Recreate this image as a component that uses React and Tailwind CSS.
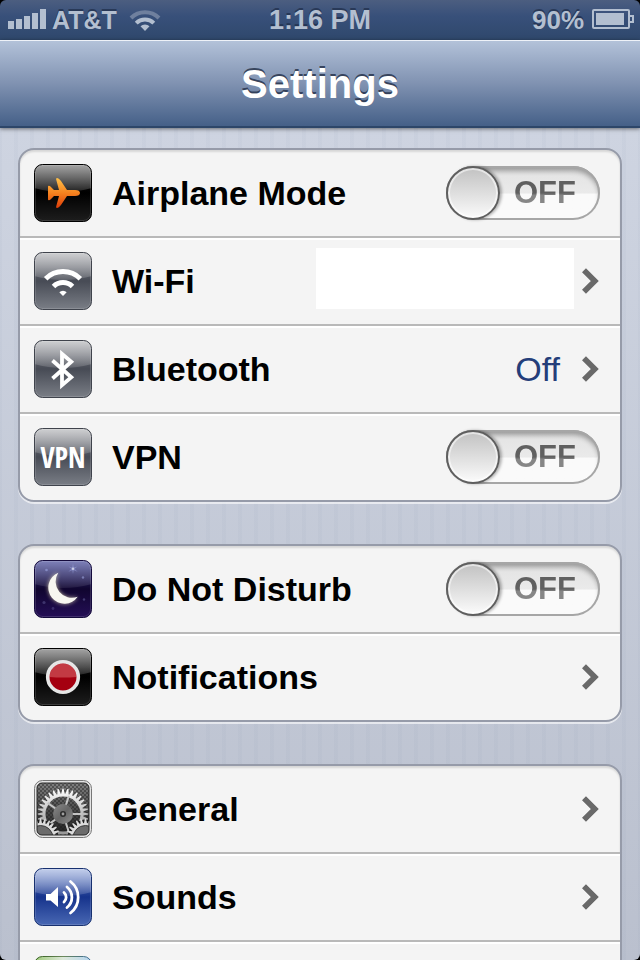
import React, { useId, useState } from "react";

const polar = (cx, cy, r, a) =>
  `${(cx + r * Math.cos(a)).toFixed(2)} ${(cy + r * Math.sin(a)).toFixed(2)}`;

// Outline of a gear wheel as an SVG path
const gearPath = (cx, cy, outer, root, teeth) => {
  const step = (Math.PI * 2) / teeth;
  let d = "";
  for (let i = 0; i < teeth; i++) {
    const a = i * step - Math.PI / 2;
    d += `${i === 0 ? "M" : "L"}${polar(cx, cy, root, a - step * 0.4)}`;
    d += `L${polar(cx, cy, outer, a - step * 0.12)}`;
    d += `L${polar(cx, cy, outer, a + step * 0.12)}`;
    d += `L${polar(cx, cy, root, a + step * 0.4)}`;
  }
  return d + "Z";
};

const Tile = ({ stops, border, gloss = 0.62, children }) => {
  const id = useId();
  return (
    <svg viewBox="0 0 58 58" className="h-[58px] w-[58px] shrink-0" aria-hidden="true">
      <defs>
        <linearGradient id={`${id}base`} x1="0" y1="0" x2="0" y2="1">
          <stop offset="0" stopColor={stops[0]} />
          <stop offset="0.5" stopColor={stops[1]} />
          <stop offset="1" stopColor={stops[2]} />
        </linearGradient>
        <linearGradient id={`${id}gloss`} x1="0" y1="0" x2="0" y2="1">
          <stop offset="0" stopColor="#fff" stopOpacity={gloss} />
          <stop offset="1" stopColor="#fff" stopOpacity={gloss * 0.2} />
        </linearGradient>
        <clipPath id={`${id}clip`}>
          <rect x="0.5" y="0.5" width="57" height="57" rx="8" />
        </clipPath>
      </defs>
      <g clipPath={`url(#${id}clip)`}>
        <rect width="58" height="58" fill={`url(#${id}base)`} />
        <path d="M0 0H58V24Q29 32 0 24Z" fill={`url(#${id}gloss)`} />
      </g>
      <rect x="1.5" y="1.5" width="55" height="55" rx="7" fill="none" stroke="#fff" strokeOpacity="0.14" />
      <rect x="0.5" y="0.5" width="57" height="57" rx="8" fill="none" stroke={border} />
      {children}
    </svg>
  );
};

const black = ["#1a1a1a", "#000000", "#1e1e1e"];
const slate = ["#85878d", "#474b55", "#7b7f87"];

const AirplaneIcon = () => (
  <Tile stops={black} border="#000">
    <defs>
      <linearGradient id="plane" x1="0" y1="0" x2="0" y2="1">
        <stop offset="0" stopColor="#ffc24a" />
        <stop offset="0.5" stopColor="#f5821f" />
        <stop offset="1" stopColor="#dc3c08" />
      </linearGradient>
    </defs>
    <path
      d="M46 29c0-2-2-3-5-3h-8l-6-9c-1.500-2-3-3-4-3s-1 1-.7 2L25 26h-5l-3.500-3.500c-.8-.8-2.500-1-2.500 0v13c0 1 1.700.8 2.500 0L20 32h5l-2.700 10c-.3 1-.3 2 .7 2s2.500-1 4-3l6-9h8c3 0 5-1 5-3z"
      fill="url(#plane)"
    />
  </Tile>
);

const WifiIcon = () => (
  <Tile stops={slate} border="#3f434c">
    <g fill="none" stroke="#fff" strokeWidth="5">
      <path d="M11.700 26.700A24.500 24.500 0 0 1 46.300 26.700" />
      <path d="M19.500 34.500A13.500 13.500 0 0 1 38.500 34.500" />
    </g>
    <path d="M29 44L25.300 40.300A5.200 5.200 0 0 1 32.700 40.300Z" fill="#fff" />
  </Tile>
);

const BluetoothIcon = () => (
  <Tile stops={slate} border="#3f434c">
    <path
      d="M18.500 20.500L37.300 37.300L28 45.200V13.800L37.300 21.700L18.500 38.500"
      fill="none"
      stroke="#fff"
      strokeWidth="3.800"
      strokeMiterlimit="10"
    />
  </Tile>
);

const VpnIcon = () => (
  <Tile stops={slate} border="#3f434c">
    <text
      x="29"
      y="40"
      textAnchor="middle"
      fill="#fff"
      className="font-['Liberation_Sans_Narrow','Open_Sans_Condensed','Liberation_Sans',sans-serif] text-[28px] font-bold"
    >
      VPN
    </text>
  </Tile>
);

const MoonIcon = () => (
  <Tile stops={["#3a3f96", "#10052f", "#250f57"]} border="#140a3c" gloss={0.36}>
    <g fill="#aab4f0">
      <circle cx="12.500" cy="10" r="1.300" opacity="0.5" />
      <circle cx="49" cy="17.500" r="1.200" opacity="0.5" />
      <circle cx="50" cy="39.500" r="1.200" opacity="0.3" />
      <circle cx="10" cy="42.500" r="1.600" opacity="0.25" />
      <circle cx="19" cy="48.500" r="1.400" opacity="0.2" />
      <path d="M39 3l.8 4.400 3.700-1-2.900 2.400 3 3-3.800-1.600L39 14l-.8-3.800-3.800 1.600 3-3-2.900-2.400 3.700 1z" opacity="0.4" />
      <circle cx="39" cy="8.800" r="1.200" fill="#fff" opacity="0.6" />
    </g>
    <path
      d="M24.300 12.700A16.100 16.100 0 1 0 43.700 36.700A16.200 16.200 0 0 1 24.300 12.700Z"
      fill="#f7f6f0"
      className="drop-shadow-[0_0_2px_rgba(255,245,200,0.7)]"
    />
  </Tile>
);

const NotificationsIcon = () => (
  <Tile stops={black} border="#000">
    <circle cx="29" cy="29" r="15.300" fill="#a50010" stroke="#e6e6e6" strokeWidth="3.600" />
    <path d="M15.500 29A13.500 13.500 0 0 1 42.500 29Q29 30 15.500 29Z" fill="#f09090" fillOpacity="0.4" />
  </Tile>
);

const SoundsIcon = () => (
  <Tile stops={["#6f8bd0", "#16338c", "#4a69b4"]} border="#17306f" gloss={0.6}>
    <path d="M12 26h4.500L24 19v20l-7.500-6.500H12z" fill="#fff" />
    <g fill="none" stroke="#fff" strokeWidth="2.800" strokeLinecap="round">
      <path d="M30 24.500A6.300 6.300 0 0 1 30 34" />
      <path d="M33 19A13.200 13.200 0 0 1 33 39.500" />
      <path d="M36.500 13.500A20 20 0 0 1 36.500 45" />
    </g>
  </Tile>
);

const GeneralIcon = () => (
  <svg viewBox="0 0 58 58" className="h-[58px] w-[58px] shrink-0" aria-hidden="true">
    <defs>
      <linearGradient id="metal" x1="0" y1="0" x2="0" y2="1">
        <stop offset="0" stopColor="#ffffff" />
        <stop offset="0.5" stopColor="#bdbdbd" />
        <stop offset="1" stopColor="#8c8c8c" />
      </linearGradient>
      <linearGradient id="plate" x1="0" y1="0" x2="0" y2="1">
        <stop offset="0" stopColor="#858585" />
        <stop offset="0.5" stopColor="#4c4c4c" />
        <stop offset="1" stopColor="#1c1c1c" />
      </linearGradient>
      <linearGradient id="hub" x1="0" y1="0" x2="1" y2="1">
        <stop offset="0" stopColor="#8a8a8a" />
        <stop offset="0.5" stopColor="#666666" />
        <stop offset="1" stopColor="#8f8f8f" />
      </linearGradient>
      <pattern id="holes" width="4" height="4" patternUnits="userSpaceOnUse">
        <circle cx="1" cy="1" r="0.8" fill="#1c1c1c" />
        <circle cx="3" cy="3" r="0.8" fill="#1c1c1c" />
      </pattern>
      <clipPath id="inner">
        <rect x="3" y="3" width="52" height="52" rx="5" />
      </clipPath>
    </defs>
    <rect x="0.5" y="0.5" width="57" height="57" rx="8" fill="#e4e4e4" stroke="#777" />
    <g clipPath="url(#inner)">
      <rect width="58" height="58" fill="url(#plate)" />
      <rect width="58" height="58" fill="url(#holes)" />
      <path
        fillRule="evenodd"
        fill="url(#metal)"
        d={`${gearPath(29, 34, 25.500, 20.500, 32)}M46.500 34A17.500 17.500 0 1 0 11.500 34A17.500 17.500 0 1 0 46.500 34Z`}
      />
      <path
        d={[0, 72, 144, 216, 288]
          .map((deg) => `M29 34L${polar(29, 34, 19, (deg * Math.PI) / 180)}`)
          .join("")}
        stroke="#c4c4c4"
        strokeWidth="2"
      />
      <circle cx="29" cy="34" r="10" fill="url(#hub)" />
      <circle cx="29" cy="34" r="3" fill="#2c2c2c" />
      <circle cx="29" cy="34" r="1.400" fill="#a0a0a0" />
      {[6.500, 51.500].map((cx) => (
        <g key={cx}>
          <circle cx={cx} cy="58" r="18" fill="#1f1f1f" />
          <path d={gearPath(cx, 58, 19.500, 15, 26)} fill="#dcdcdc" />
          <circle cx={cx} cy="58" r="12.500" fill="#6b6b6b" stroke="#3c3c3c" />
        </g>
      ))}
    </g>
    <rect x="3" y="3" width="52" height="52" rx="5" fill="none" stroke="#2a2a2a" />
  </svg>
);

const WallpaperIcon = () => (
  <svg viewBox="0 0 58 58" className="h-[58px] w-[58px] shrink-0" aria-hidden="true">
    <defs>
      <linearGradient id="photo" x1="0" y1="0" x2="1" y2="0">
        <stop offset="0" stopColor="#9fca7a" />
        <stop offset="0.5" stopColor="#dde8da" />
        <stop offset="1" stopColor="#b4d4ee" />
      </linearGradient>
      <linearGradient id="photoEdge" x1="0" y1="0" x2="1" y2="0">
        <stop offset="0" stopColor="#2f5a1c" />
        <stop offset="0.5" stopColor="#6d8a5c" />
        <stop offset="1" stopColor="#3a6a98" />
      </linearGradient>
    </defs>
    <rect x="0.5" y="0.5" width="57" height="57" rx="8" fill="url(#photo)" stroke="url(#photoEdge)" />
  </svg>
);

const Chevron = () => (
  <svg viewBox="0 0 18 26" className="h-[26px] w-[18px] shrink-0" aria-hidden="true">
    <path d="M2 2.200L12.800 13L2 23.800" fill="none" stroke="#696969" strokeWidth="5.600" />
  </svg>
);

const Switch = ({ id, checked, onChange }) => (
  <span className="relative flex h-[54px] w-[154px] shrink-0 items-center rounded-full bg-linear-to-b from-[#e2e2e2] via-[#eaeaea] via-50% to-[#fafafa] to-52% shadow-[inset_0_0_0_2px_#a6a6a6,inset_0_5px_5px_rgba(0,0,0,0.32)]">
    <input
      id={id}
      type="checkbox"
      role="switch"
      checked={checked}
      onChange={(e) => onChange(e.target.checked)}
      className="peer absolute inset-0 z-10 cursor-pointer opacity-0"
    />
    <span className="h-[54px] w-[54px] shrink-0 rounded-full border-2 border-[#5f5f5f] bg-linear-to-b from-[#c2c2c2] to-[#fbfbfb] shadow-[2px_0_3px_rgba(0,0,0,0.3),inset_0_0_0_2px_rgba(255,255,255,0.55)] peer-checked:order-2 peer-checked:ml-auto" />
    <span className="ml-3.5 bg-linear-to-b from-[#606060] from-50% to-[#868686] to-55% bg-clip-text text-[31px] font-bold text-transparent">
      {checked ? "ON" : "OFF"}
    </span>
  </span>
);

const rowClass =
  "flex h-[88px] items-center border-b-2 border-[#b9b9b9] pr-5 pl-3.5 shadow-[inset_0_2px_0_#fff] first:shadow-[inset_0_2px_2px_rgba(0,0,0,0.12)] first:rounded-t-[14px] last:h-[86px] last:border-b-0";

const SwitchRow = ({ id, icon, label }) => {
  const [on, setOn] = useState(false);
  return (
    <li className={rowClass}>
      {icon}
      <label htmlFor={id} className="ml-5 flex-1 text-[34px] font-bold">
        {label}
      </label>
      <Switch id={id} checked={on} onChange={setOn} />
    </li>
  );
};

const LinkRow = ({ icon, label, children }) => (
  <li className={rowClass}>
    <a href="#" className="flex min-w-0 flex-1 items-center">
      {icon}
      <span className="ml-5 flex-1 text-[34px] font-bold">{label}</span>
      {children}
      <Chevron />
    </a>
  </li>
);

const Group = ({ children }) => (
  <ul className="shrink-0 rounded-2xl border-2 border-[#969ba9] bg-[#f4f4f4] shadow-[0_2px_0_rgba(255,255,255,0.6)]">
    {children}
  </ul>
);

const StatusBar = () => (
  <div className="flex h-10 shrink-0 items-center bg-linear-to-b from-[#4c5e80] via-[#38507a] via-40% to-[#2f486c] px-1.5 font-bold leading-10 text-[#b3bfd0] [text-shadow:0_-2px_0_rgba(20,32,56,0.55)]">
    <div className="flex flex-1 items-center">
      <svg viewBox="0 0 40 40" className="ml-0.5 h-10 w-10" fill="#b3bfd0" aria-hidden="true">
        <path d="M0 21h6v8H0zM8 19h6v10H8zM16 16h6v13h-6zM24 13h6v16h-6zM32 9h6v20h-6z" />
      </svg>
      <span className="ml-1 text-[25px]">AT&amp;T</span>
      <svg viewBox="0 0 32 40" className="ml-3 h-10 w-8" aria-hidden="true">
        <path d="M2 18A19.800 19.800 0 0 1 30 18" fill="none" stroke="#6f809e" strokeWidth="4" />
        <path d="M7.200 23.200A12.500 12.500 0 0 1 24.800 23.200" fill="none" stroke="#b3bfd0" strokeWidth="4" />
        <path d="M16 31L11.500 26.300A6.800 6.800 0 0 1 20.500 26.300Z" fill="#b3bfd0" />
      </svg>
    </div>
    <span className="text-[27px]">1:16 PM</span>
    <div className="flex flex-1 items-center justify-end">
      <span className="text-[26px]">90%</span>
      <svg viewBox="0 0 42 40" className="ml-2 h-10 w-[42px]" fill="none" stroke="#b3bfd0" strokeWidth="2" aria-hidden="true">
        <rect x="1" y="10" width="36" height="18" rx="1" />
        <path d="M37 16h4v6h-4" />
        <rect x="4" y="13" width="28" height="12" fill="#b3bfd0" stroke="none" />
      </svg>
    </div>
  </div>
);

const App = () => {
  return (
    <div className="h-screen bg-black font-['Liberation_Sans',Arial,sans-serif] text-black">
      <div className="flex h-full flex-col overflow-hidden rounded-md">
        <StatusBar />
        <header className="z-10 flex h-[88px] shrink-0 items-center justify-center border-t border-b-2 border-t-[#eef2f8] border-b-[#2d4669] bg-linear-to-b from-[#b3c2d9] via-[#8092b1] via-50% to-[#456088] shadow-[0_1px_4px_rgba(0,0,0,0.5)]">
          <h1 className="text-[40px] font-bold text-white [text-shadow:0_-2px_0_rgba(40,52,76,0.85)]">Settings</h1>
        </header>
        <main className="flex flex-1 flex-col gap-[42px] overflow-hidden bg-[repeating-linear-gradient(90deg,rgba(70,95,130,0.03)_0_2px,transparent_2px_14px,rgba(70,95,130,0.03)_14px_16px),linear-gradient(#ced4e1,#bac0ce)] px-[18px] pt-5">
          <Group>
            <SwitchRow id="airplane" icon={<AirplaneIcon />} label="Airplane Mode" />
            <LinkRow icon={<WifiIcon />} label="Wi-Fi">
              <span className="mr-2 mb-1.5 h-[61px] w-[258px] bg-white" />
            </LinkRow>
            <LinkRow icon={<BluetoothIcon />} label="Bluetooth">
              <span className="mr-[22px] text-[34px] text-[#243e7a]">Off</span>
            </LinkRow>
            <SwitchRow id="vpn" icon={<VpnIcon />} label="VPN" />
          </Group>
          <Group>
            <SwitchRow id="dnd" icon={<MoonIcon />} label="Do Not Disturb" />
            <LinkRow icon={<NotificationsIcon />} label="Notifications" />
          </Group>
          <Group>
            <LinkRow icon={<GeneralIcon />} label="General" />
            <LinkRow icon={<SoundsIcon />} label="Sounds" />
            <LinkRow icon={<WallpaperIcon />} />
          </Group>
        </main>
      </div>
    </div>
  );
};

export default App;
